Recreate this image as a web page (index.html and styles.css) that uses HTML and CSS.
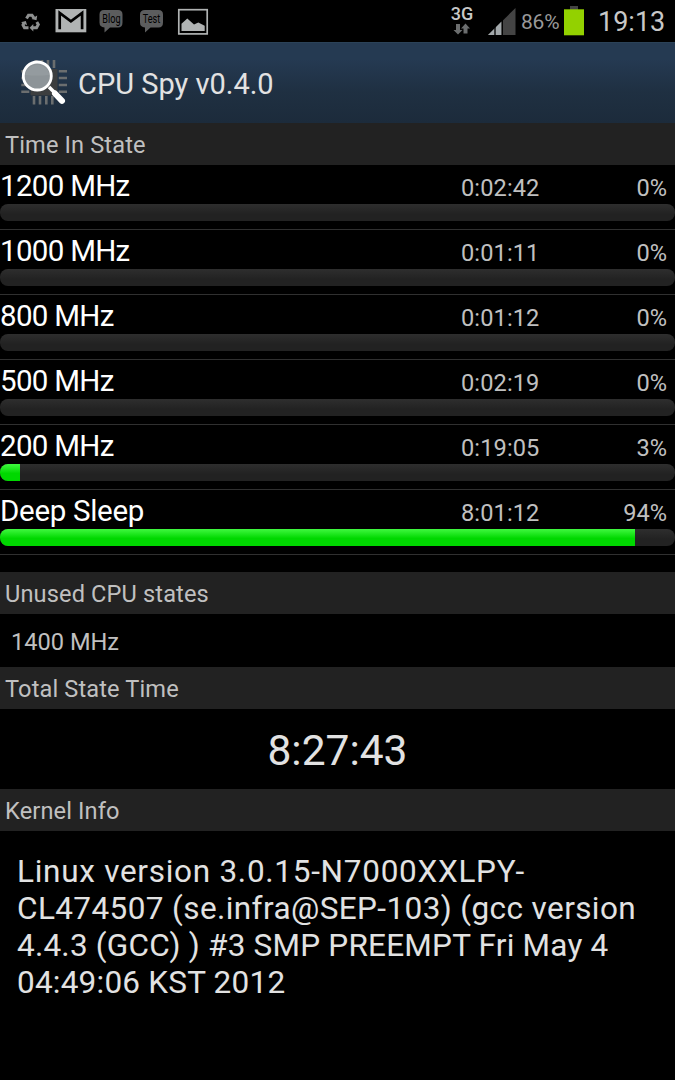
FILE: index.html
```html
<!DOCTYPE html>
<html lang="en">
  <head>
    <meta charset="UTF-8" />
    <meta name="viewport" content="width=device-width, initial-scale=1.0" />
    <title>CPU Spy</title>

    <!-- CSS -->
    <link rel="stylesheet" href="styles.css">
  </head>
  <body>
    <!-- Status bar -->
    <div class="status">
      <svg class="status-icons" width="230" height="42" viewBox="0 0 230 42">
        <g fill="none" stroke="#8e9090" stroke-width="3">
          <path d="M26.5 18.500l2-3.300h3.500l2 3" />
          <path d="M36.800 22l1.500 2.500-1.800 3.200H33" />
          <path d="M28.500 27.700H24.500l-1.500-2.700 1.200-2.500" />
        </g>
        <g fill="#8e9090">
          <path d="M31.500 19l5 1.200.7-4.700z" />
          <path d="M33.300 24v7.400l-3.700-3.700z" />
          <path d="M21 22.300l4.800-1.300 1.300 4.300z" />
        </g>
        <rect x="55.500" y="9" width="30.800" height="23.300" fill="#b0b3b3" />
        <path d="M59.700 29.300V13l11.200 8.300L82.100 13v16.300" fill="none" stroke="#000" stroke-width="2.700" />
        <path d="M104 10h14q4.500 0 4.500 4.500v8q0 5-4.500 5h-8l-5.500 5V27.500q-5-.5-5-5v-8q0-4.500 4.500-4.500z" fill="#5c5d5e" />
        <path d="M145 10h13.500q4.500 0 4.500 4.500v8q0 5-4.500 5h-8l-5.500 5V27.500q-5-.5-5-5v-8q0-4.500 5-4.500z" fill="#5c5d5e" />
        <text class="bubble-text" x="102.300" y="23.300" textLength="18.200" lengthAdjust="spacingAndGlyphs">Blog</text>
        <text class="bubble-text" x="142.700" y="23.300" textLength="17.500" lengthAdjust="spacingAndGlyphs">Test</text>
        <rect x="178.800" y="9.700" width="28.400" height="24.200" fill="none" stroke="#b0b3b3" stroke-width="1.700" />
        <path d="M181.500 31v-7.200l5.800-5.200 6.700 5.800 4.300-2 6.400 3.300V31z" fill="#b0b3b3" />
      </svg>

      <div class="status-right">
        <div class="network">
          <span>3G</span>
          <svg width="18" height="12" viewBox="0 0 18 12">
            <path d="M3 1h4v6h2.500L5 11.500.5 7H3z" fill="#6b6d6e" />
            <path d="M10.500 10.500v-5H8L12.500.5 17 5.500h-2.500v5z" fill="#6b6d6e" />
          </svg>
        </div>
        <svg class="signal" width="28" height="27" viewBox="0 0 28 27">
          <path d="M0 27L27.500 0v27z" fill="#444" />
          <path d="M0 27L13.500 13.500V27z" fill="#a3a9ac" />
          <path d="M7 18v9M14.300 12v15" stroke="#000" stroke-width="1.300" />
        </svg>
        <span class="percent">86%</span>
        <svg class="battery" width="20" height="30" viewBox="0 0 20 30">
          <rect x="6" y="0" width="8" height="4" fill="#444" />
          <rect x="0" y="3.300" width="20" height="26" fill="#93d100" />
        </svg>
        <span class="clock">19:13</span>
      </div>
    </div>

    <!-- Title bar -->
    <div class="header">
      <svg class="logo" width="48" height="48" viewBox="0 0 48 48">
        <path d="M16 2v8M22 2v8M28 2v8M34 2v8M14 38v8.500M20 38v8.500M26.300 38v8.500M32.300 38v8.500M1.300 13.300h8M1.300 20h8M1.300 27h8M1.300 33.700h8M38.800 13.300h8.200M38.800 20h8.200M38.800 27h8.200M38.800 33.700h8.200" stroke="#6b6e6f" stroke-width="2.600" />
        <rect x="10.500" y="11" width="27" height="26.500" rx="1" fill="#3c3e3f" />
        <path d="M29 29l6 6" stroke="#fff" stroke-width="3.500" />
        <path d="M35 35.500l7 7.300" stroke="#fff" stroke-width="6" stroke-linecap="round" />
        <circle cx="17.300" cy="18" r="14" fill="#8d9498" stroke="#fff" stroke-width="2.800" />
        <path d="M5 17a12.500 12.500 0 0 1 24.600 0q-12 1-24.600 0z" fill="#a7adb0" opacity=".3" />
      </svg>
      <h1>CPU Spy v0.4.0</h1>
    </div>

    <h2>Time In State</h2>
    <div class="states">
      <div class="state">
        <div class="info">
          <span class="freq">1200 MHz</span>
          <span class="time">0:02:42</span>
          <span class="share">0%</span>
        </div>
        <div class="bar"></div>
      </div>
      <div class="state">
        <div class="info">
          <span class="freq">1000 MHz</span>
          <span class="time">0:01:11</span>
          <span class="share">0%</span>
        </div>
        <div class="bar"></div>
      </div>
      <div class="state">
        <div class="info">
          <span class="freq">800 MHz</span>
          <span class="time">0:01:12</span>
          <span class="share">0%</span>
        </div>
        <div class="bar"></div>
      </div>
      <div class="state">
        <div class="info">
          <span class="freq">500 MHz</span>
          <span class="time">0:02:19</span>
          <span class="share">0%</span>
        </div>
        <div class="bar"></div>
      </div>
      <div class="state">
        <div class="info">
          <span class="freq">200 MHz</span>
          <span class="time">0:19:05</span>
          <span class="share">3%</span>
        </div>
        <div class="bar"><div class="fill" style="width: 3%"></div></div>
      </div>
      <div class="state">
        <div class="info">
          <span class="freq deep">Deep Sleep</span>
          <span class="time">8:01:12</span>
          <span class="share">94%</span>
        </div>
        <div class="bar"><div class="fill" style="width: 94%"></div></div>
      </div>
    </div>

    <h2>Unused CPU states</h2>
    <div class="unused">1400 MHz</div>

    <h2>Total State Time</h2>
    <div class="total">8:27:43</div>

    <h2>Kernel Info</h2>
    <p class="kernel"><span class="wide">Linux version 3.0.15-N7000XXLPY-</span>CL474507 (se.infra@SEP-103) (gcc version <span class="tight">4.4.3 (GCC) ) #3 SMP PREEMPT Fri May 4 04:49:06 KST 2012</span></p>
  </body>
</html>
```
FILE: styles.css
```css
* {
  box-sizing: border-box;
}

body {
  margin: 0;
  height: 1080px;
  overflow: hidden;
  background-color: #000;
  color: #c0c0c0;
  font-family: Roboto, "Liberation Sans", sans-serif;
}

.status {
  display: flex;
  justify-content: space-between;
  height: 42px;
}

.bubble-text {
  font-size: 12.5px;
  fill: #000;
}

.status-right {
  display: flex;
  align-items: flex-start;
  padding-right: 11px;
}

.network {
  display: flex;
  flex-direction: column;
  align-items: center;
  width: 24px;
  margin-right: 14px;
  padding-top: 4px;
  font-size: 18px;
  line-height: 19px;
  font-weight: 500;
  color: #c8c8c8;
}

.signal {
  margin: 8px 5px 0 0;
}

.percent {
  width: 38px;
  margin-right: 5px;
  font-size: 21px;
  line-height: 44px;
  letter-spacing: -0.2px;
  color: #999;
}

.battery {
  margin-top: 6px;
}

.clock {
  width: 66px;
  margin-left: 14px;
  font-size: 27px;
  line-height: 44px;
  color: #c8c8c8;
}

.header {
  display: flex;
  align-items: center;
  height: 81px;
  padding-left: 20px;
  background: linear-gradient(#253a52 0%, #253a52 20%, #1f3042 60%, #1c2b3b 100%);
  border-top: 1px solid #2b4258;
}

.logo {
  margin-right: 10px;
  margin-top: -2px;
}

h1 {
  margin: 1px 0 0;
  font-size: 29px;
  font-weight: 400;
  color: #e2e2e2;
}

h2 {
  margin: 0;
  height: 42px;
  padding-left: 5px;
  background-color: #222;
  font-size: 23.6px;
  line-height: 45px;
  font-weight: 400;
  letter-spacing: 0.13px;
}

.states {
  height: 407px;
}

.state {
  height: 65px;
  border-bottom: 1px solid #303030;
}

.info {
  display: flex;
  height: 39px;
  padding-right: 8px;
  line-height: 42px;
}

.freq {
  width: 461px;
  font-size: 29.5px;
  letter-spacing: -0.7px;
  color: #fff;
}

.deep {
  letter-spacing: -0.3px;
}

.time {
  font-size: 23.6px;
  line-height: 46px;
  letter-spacing: 0.1px;
}

.share {
  margin-left: auto;
  font-size: 23.6px;
  line-height: 46px;
}

.bar {
  height: 17px;
  overflow: hidden;
  border-radius: 8px;
  background: linear-gradient(#2e2e2e, #222 60%);
}

.fill {
  height: 100%;
  background: linear-gradient(#40f840, #00d800 55%);
}

.unused {
  height: 53px;
  padding-left: 11px;
  font-size: 23.6px;
  line-height: 56px;
}

.total {
  height: 80px;
  font-size: 42.5px;
  line-height: 83px;
  text-align: center;
  color: #e2e2e2;
}

.kernel {
  margin: 0;
  padding: 22px 17px;
  font-size: 31.5px;
  line-height: 37.1px;
  letter-spacing: 0.4px;
  color: #e2e2e2;
}

.kernel .wide {
  letter-spacing: 0.72px;
}

.kernel .tight {
  letter-spacing: 0.22px;
}
```
